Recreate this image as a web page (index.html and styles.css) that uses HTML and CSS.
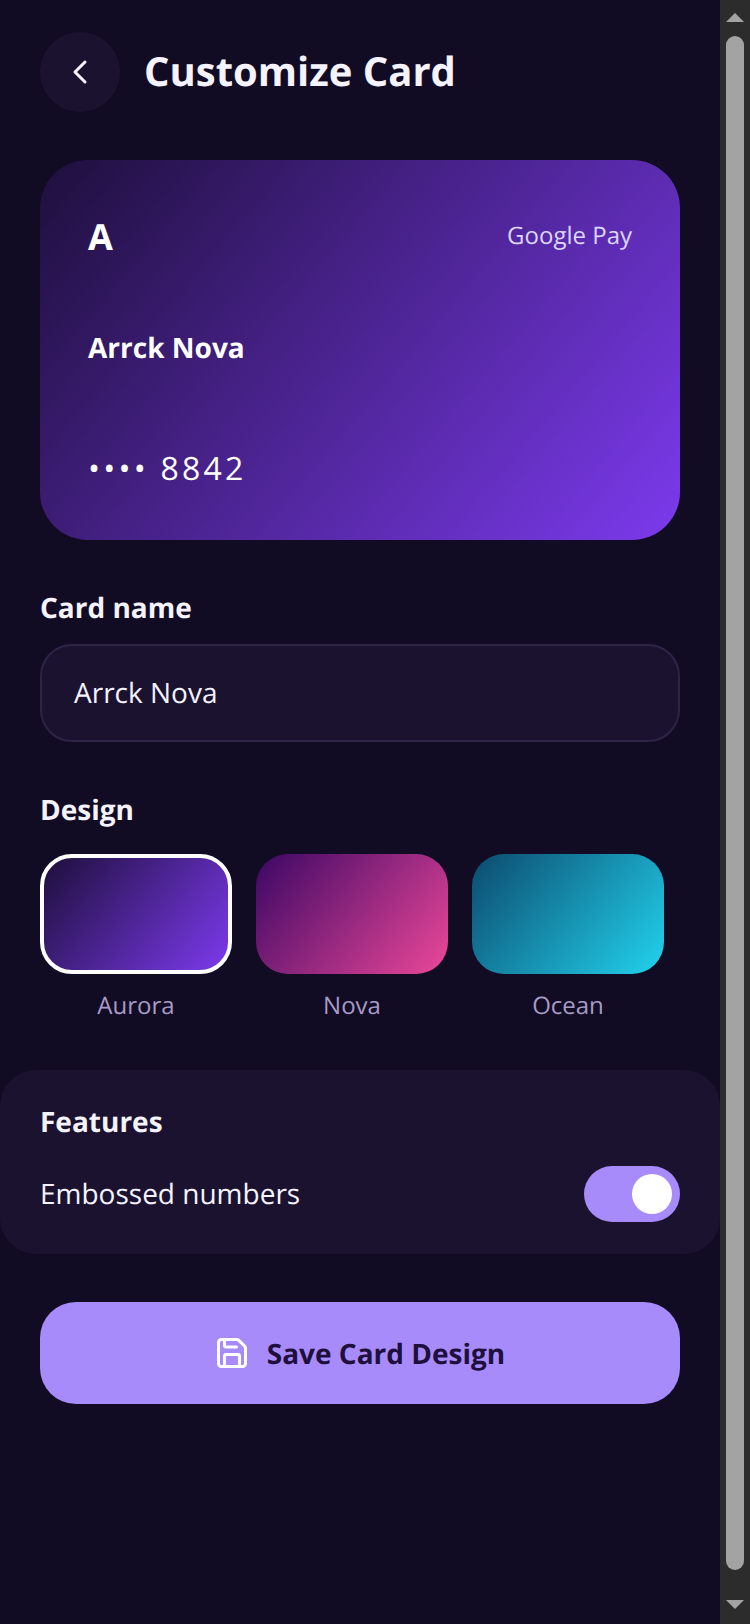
FILE: index.html
```html
<!DOCTYPE html>
<html lang="en">
<head>
<meta charset="utf-8">
<title>Customize Card</title>
<link rel="stylesheet" href="styles.css">
</head>
<body>
<div class="frame">
  <main class="page">
    <header class="topbar">
      <button class="back" type="button" aria-label="Back">
        <svg class="back-icon" viewBox="0 0 24 24"><path d="m15 18-6-6 6-6"/></svg>
      </button>
      <h1 class="title">Customize Card</h1>
    </header>

    <section class="card aurora">
      <div class="card-top">
        <span class="card-initial">A</span>
        <span class="card-wallet">Google Pay</span>
      </div>
      <div class="card-name">Arrck Nova</div>
      <div class="card-number">•••• 8842</div>
    </section>

    <section class="field">
      <h2 class="label">Card name</h2>
      <div class="input">Arrck Nova</div>
    </section>

    <section class="design">
      <h2 class="label label-design">Design</h2>
      <div class="swatches">
        <div class="swatch-item">
          <div class="swatch aurora selected"></div>
          <span class="swatch-label">Aurora</span>
        </div>
        <div class="swatch-item">
          <div class="swatch nova"></div>
          <span class="swatch-label">Nova</span>
        </div>
        <div class="swatch-item">
          <div class="swatch ocean"></div>
          <span class="swatch-label">Ocean</span>
        </div>
      </div>
    </section>

    <section class="features">
      <h2 class="features-title">Features</h2>
      <div class="feature-row">
        <span class="feature-name">Embossed numbers</span>
        <span class="toggle"><span class="knob"></span></span>
      </div>
    </section>

    <button class="save" type="button">
      <svg class="save-icon" viewBox="0 0 24 24">
        <path d="M15.2 3a2 2 0 0 1 1.4.6l3.8 3.8a2 2 0 0 1 .6 1.4V19a2 2 0 0 1-2 2H5a2 2 0 0 1-2-2V5a2 2 0 0 1 2-2z"/>
        <path d="M17 21v-7a1 1 0 0 0-1-1H8a1 1 0 0 0-1 1v7"/>
        <path d="M7 3v4a1 1 0 0 0 1 1h7"/>
      </svg>
      <span class="save-text">Save Card Design</span>
    </button>
  </main>

  <aside class="scrollbar" aria-hidden="true">
    <span class="arrow arrow-up"></span>
    <span class="thumb"></span>
    <span class="arrow arrow-down"></span>
  </aside>
</div>
</body>
</html>
```

FILE: styles.css
```css
* { box-sizing: border-box; }

html, body {
  margin: 0;
  height: 100%;
  background: #120b24;
  overflow: hidden;
}

body {
  font-family: "Open Sans", "Noto Sans", sans-serif;
  color: #f5f3ff;
  text-rendering: geometricPrecision;
}

.frame {
  display: flex;
  width: 750px;
  height: 1624px;
}

.page {
  width: 720px;
  flex: none;
  padding: 32px 0 0;
}

.topbar {
  display: flex;
  align-items: center;
  gap: 24px;
  padding: 0 40px;
  margin-bottom: 48px;
}

.back {
  width: 80px;
  height: 80px;
  border: 0;
  padding: 0;
  border-radius: 50%;
  background: #1b1230;
  display: flex;
  align-items: center;
  justify-content: center;
}

.back-icon {
  width: 40px;
  height: 40px;
  fill: none;
  stroke: #f5f3ff;
  stroke-width: 1.8;
  stroke-linecap: round;
  stroke-linejoin: round;
}

.title {
  margin: 0 0 2px;
  font-size: 40px;
  line-height: 54px;
  font-weight: 700;
}

.aurora { background: linear-gradient(130deg, #1e0f3c, #7c3aed); }
.nova { background: linear-gradient(130deg, #3b0764, #ec4899); }
.ocean { background: linear-gradient(130deg, #0c4a6e, #22d3ee); }

.card {
  margin: 0 40px;
  height: 380px;
  border-radius: 48px;
  padding: 48px;
  display: flex;
  flex-direction: column;
  justify-content: space-between;
}

.card-top {
  display: flex;
  justify-content: space-between;
  align-items: flex-start;
}

.card-initial {
  font-size: 36px;
  line-height: 58px;
  font-weight: 700;
  color: #fff;
}

.card-wallet {
  font-size: 24px;
  line-height: 56px;
  color: #ddd6fe;
}

.card-name {
  margin-bottom: 15px;
  font-size: 28px;
  line-height: 44px;
  font-weight: 700;
  color: #fff;
}

.card-number {
  margin-bottom: -1px;
  font-size: 32px;
  line-height: 48px;
  letter-spacing: 3.2px;
  color: #fff;
}

.field {
  padding: 0 40px;
  margin-top: 48px;
}

.label {
  margin: 0 0 16px;
  font-size: 28px;
  line-height: 40px;
  font-weight: 700;
  color: #f5f3ff;
}

.label-design {
  margin-bottom: 24px;
}

.input {
  height: 98px;
  padding: 0 32px;
  display: flex;
  align-items: center;
  font-size: 28px;
  background: #1b1230;
  border: 2px solid #2d2545;
  border-radius: 32px;
  color: #f5f3ff;
}

.design {
  padding: 0 40px;
  margin-top: 48px;
}

.swatches {
  display: flex;
  gap: 24px;
}

.swatch-item {
  width: 192px;
  display: flex;
  flex-direction: column;
  align-items: center;
  gap: 16px;
}

.swatch {
  width: 192px;
  height: 120px;
  border-radius: 32px;
}

.selected { border: 4px solid #fff; }

.swatch-label {
  font-size: 24px;
  line-height: 32px;
  color: #a79cc4;
}

.features {
  margin-top: 48px;
  height: 184px;
  padding: 32px 40px;
  background: #1b1230;
  border-radius: 36px;
}

.features-title {
  margin: 0 0 24px;
  font-size: 28px;
  line-height: 40px;
  font-weight: 700;
}

.feature-row {
  display: flex;
  align-items: center;
  justify-content: space-between;
}

.feature-name {
  font-size: 28px;
  line-height: 38px;
}

.toggle {
  width: 96px;
  height: 56px;
  padding: 8px;
  border-radius: 28px;
  background: #a78bfa;
  display: flex;
  justify-content: flex-end;
}

.knob {
  width: 40px;
  height: 40px;
  border-radius: 50%;
  background: #fff;
}

.save {
  margin: 48px 40px 0;
  width: 640px;
  height: 102px;
  border: 0;
  border-radius: 36px;
  background: #a78bfa;
  color: #1e0f3c;
  font-family: inherit;
  font-size: 28px;
  font-weight: 700;
  text-rendering: inherit;
  display: flex;
  align-items: center;
  justify-content: center;
  gap: 17px;
}

.save-text {
  padding-top: 2px;
}

.save-icon {
  width: 36px;
  height: 36px;
  margin-left: -1px;
  fill: none;
  stroke: #fff;
  stroke-width: 2;
  stroke-linecap: round;
  stroke-linejoin: round;
}

.scrollbar {
  width: 30px;
  flex: none;
  background: #2c2c2c;
  display: flex;
  flex-direction: column;
  align-items: center;
  padding-top: 13px;
}

.arrow {
  width: 0;
  height: 0;
  border-left: 9px solid transparent;
  border-right: 9px solid transparent;
}

.arrow-up { border-bottom: 9px solid #a3a3a3; }
.arrow-down { border-top: 9px solid #a3a3a3; margin-top: 30px; }

.thumb {
  width: 18px;
  height: 1534px;
  margin-top: 14px;
  border-radius: 9px;
  background: #a3a3a3;
}
```
